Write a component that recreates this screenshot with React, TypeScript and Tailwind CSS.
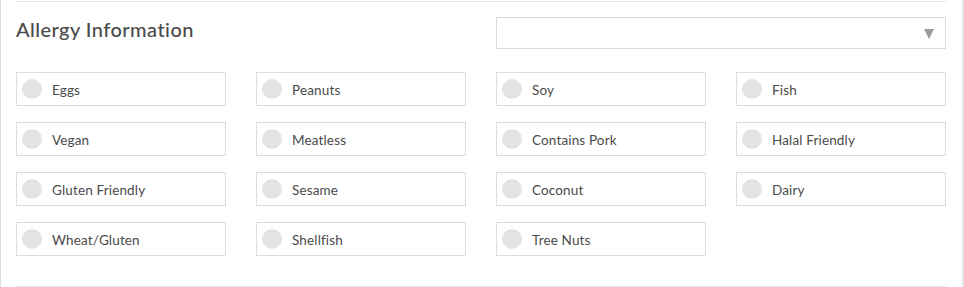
const items = [
  "Eggs",
  "Peanuts",
  "Soy",
  "Fish",
  "Vegan",
  "Meatless",
  "Contains Pork",
  "Halal Friendly",
  "Gluten Friendly",
  "Sesame",
  "Coconut",
  "Dairy",
  "Wheat/Gluten",
  "Shellfish",
  "Tree Nuts",
]

const App = () => {
  return (
    <div className="w-[964px] h-[287px] bg-white flex font-['Lato',sans-serif] text-[#4a4a4a] overflow-hidden">
      <div className="w-px h-full bg-[#dcdcdc]" />
      <div className="flex-1 pl-[15px] pr-[16px] flex flex-col">
        <div className="mt-px border-t border-[#e3e5e8]" />
        {/* Header */}
        <div className="flex items-start justify-between pt-[15px] h-[70px]">
          <h2 className="text-[20px] font-medium leading-none mt-[2px] tracking-[0.45px]">Allergy Information</h2>
          <div className="w-[450px] h-[32px] border border-[#d9dde1] flex items-center justify-end pr-[11px]">
            <svg width="10" height="10" viewBox="0 0 10 10" className="mt-px">
              <polygon points="0,0 10,0 5,10" fill="#9b9b9b" />
            </svg>
          </div>
        </div>

        {/* Options */}
        <div className="grid grid-cols-4 gap-x-[30px] gap-y-[16px]">
          {items.map((item) => (
            <label
              key={item}
              className="h-[34px] border border-[#d9dde1] flex items-center pl-[5px] cursor-pointer"
            >
              <span className="w-[20px] h-[20px] rounded-full bg-[#e3e3e3] shrink-0" />
              <span className="ml-[10px] mt-[3px] text-[13.5px] tracking-[0.15px] leading-none">{item}</span>
            </label>
          ))}
        </div>

        <div className="mt-auto mb-0 border-b border-[#e3e5e8]" />
      </div>
      <div className="w-[2px] h-full bg-[#e4e4e4]" />
    </div>
  )
}

export default App
